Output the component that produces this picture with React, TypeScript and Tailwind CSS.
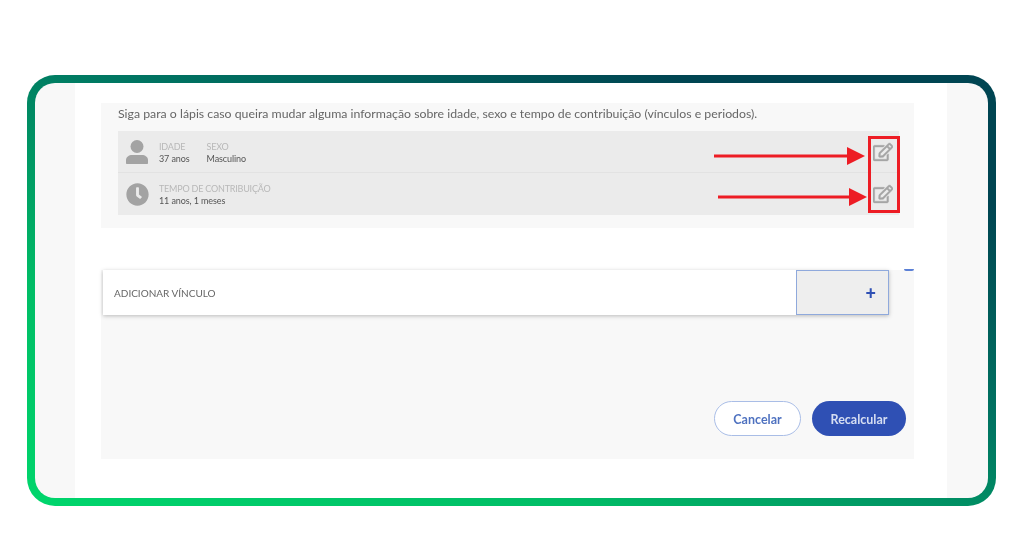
import React from "react";
import { FaClock, FaRegEdit } from "react-icons/fa";

const UserIcon = () => (
  <svg width="22" height="24" viewBox="0 0 22 24" fill="#a3a3a3">
    <circle cx="11" cy="6.5" r="6.5" />
    <path d="M1 24c-.6 0-1-.4-1-1v-3c0-3 3-5 6-5h10c3 0 6 2 6 5v3c0 .6-.4 1-1 1z" />
  </svg>
);

const Arrow = ({ width }: { width: number }) => (
  <svg width={width} height="18" viewBox={`0 0 ${width} 18`} fill="#ed1c24">
    <rect x="0" y="7.5" width={width - 16} height="3" />
    <path d={`M${width - 18} 0L${width} 9L${width - 18} 18z`} />
  </svg>
);

const Label = ({ children }: { children: React.ReactNode }) => (
  <div className="mt-[2px] text-[9px] leading-[12px] text-[#b8b8b8] tracking-[-0.2px]">{children}</div>
);
const Value = ({ children }: { children: React.ReactNode }) => (
  <div className="text-[9px] leading-[12px] text-[#555555] tracking-[-0.1px]">{children}</div>
);

const EditIcon = () => (
  <FaRegEdit className="ml-auto translate-x-[1px] stroke-[#a5a5a5] stroke-[12px] text-[20px] text-[#a5a5a5]" />
);

export default function App() {
  return (
    <div className="h-[536px] w-[1024px] bg-white pl-[27px] pt-[75px] font-['Lato','Liberation_Sans',sans-serif]">
      <div className="h-[431px] w-[969px] rounded-[28px] bg-[linear-gradient(22deg,#00d66c_0%,#00bd66_27%,#007562_57%,#004552_84%)] p-[8px]">
        <div className="flex h-[415px] w-[953px] overflow-hidden rounded-[20px] bg-[#f8f8f8] blur-[0.6px]">
          <div className="w-[40px] shrink-0" />
          <div className="relative w-[872px] shrink-0 bg-white px-[26px] pt-[20px]">
            <section className="h-[125px] w-[813px] bg-[#f8f8f8] pl-[17px] pr-[15px]">
              <p className="h-[28px] pt-[3px] text-[12.3px] leading-[16px] text-[#666666]">
                Siga para o lápis caso queira mudar alguma informação sobre idade, sexo e tempo de contribuição (vínculos e periodos).
              </p>
              <div className="h-[84px] w-[781px] bg-[#ebebeb]">
                <div className="flex h-[42px] items-center border-b border-[#e2e2e2] pl-[8px] pr-[7px]">
                  <div className="flex w-[33px] justify-start"><UserIcon /></div>
                  <div className="flex gap-[17px]">
                    <div><Label>IDADE</Label><Value>37 anos</Value></div>
                    <div><Label>SEXO</Label><Value>Masculino</Value></div>
                  </div>
                  <EditIcon />
                </div>
                <div className="flex h-[42px] items-center pl-[8px] pr-[7px]">
                  <div className="flex w-[33px] justify-start"><FaClock className="text-[23px] text-[#a3a3a3]" /></div>
                  <div>
                    <Label>TEMPO DE CONTRIBUIÇÃO</Label>
                    <Value>11 anos, 1 meses</Value>
                  </div>
                  <EditIcon />
                </div>
              </div>
            </section>

            <section className="relative mt-[42px] flex h-[189px] w-[813px] flex-col bg-[#f8f8f8] pl-[2px]">
              <div className="absolute right-0 top-[-1px] h-[2px] w-[10px] rounded-b bg-[#5b80d6]" />
              <div className="flex h-[45px] w-[786px] items-stretch bg-white shadow-[0_1px_4px_rgba(0,0,0,0.25)]">
                <div className="flex flex-1 items-center pl-[11px] pt-[2px] text-[10px] text-[#666666]">ADICIONAR VÍNCULO</div>
                <button className="flex w-[93px] items-center justify-end border border-[#8fa9dc] bg-[#eeeeee] pr-[12px] text-[18px] font-black leading-none text-[#2f50b4]">
                  +
                </button>
              </div>
              <div className="mt-[86px] flex justify-end gap-[11px] pr-[8px]">
                <button className="h-[35px] w-[87px] rounded-full border-[1.5px] border-[#a9bde6] bg-white pt-[3px] text-[12.5px] font-bold text-[#4f72c0]">
                  Cancelar
                </button>
                <button className="h-[35px] w-[94px] rounded-full bg-[#2f50b4] pt-[3px] text-[12.5px] font-bold text-[#d6def2]">
                  Recalcular
                </button>
              </div>
            </section>

            <div className="absolute left-[639px] top-[64px]"><Arrow width={151} /></div>
            <div className="absolute left-[643px] top-[105px]"><Arrow width={149} /></div>
            <div className="absolute left-[793px] top-[53px] h-[77px] w-[32px] border-[3px] border-[#ed1c24]" />
          </div>
          <div className="flex-1" />
        </div>
      </div>
    </div>
  );
}
